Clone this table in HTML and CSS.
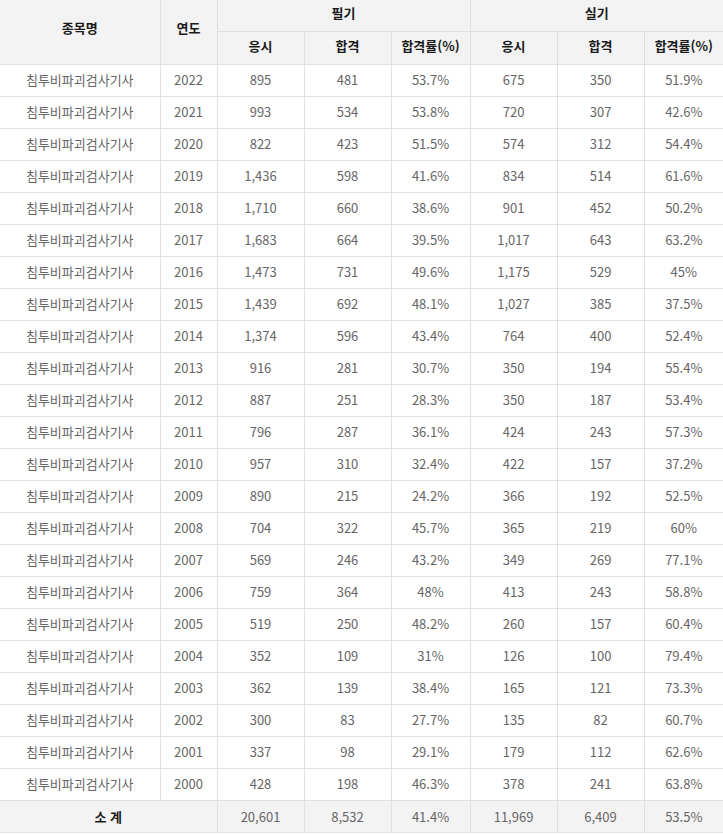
FILE: index.html
```html
<!DOCTYPE html>
<html lang="ko">
<head>
<meta charset="utf-8">
<link rel="stylesheet" href="styles.css">
</head>
<body>
<table class="stats">
<colgroup>
<col class="c-name"><col class="c-year"><col class="c-a"><col class="c-a"><col class="c-r"><col class="c-a"><col class="c-a"><col class="c-r">
</colgroup>
<thead>
<tr class="h1"><th rowspan="2" class="tall">종목명</th><th rowspan="2" class="tall">연도</th><th colspan="3">필기</th><th colspan="3">실기</th></tr>
<tr class="h2"><th>응시</th><th>합격</th><th>합격률(%)</th><th>응시</th><th>합격</th><th>합격률(%)</th></tr>
</thead>
<tbody>
<tr><td>침투비파괴검사기사</td><td>2022</td><td>895</td><td>481</td><td>53.7%</td><td>675</td><td>350</td><td>51.9%</td></tr>
<tr><td>침투비파괴검사기사</td><td>2021</td><td>993</td><td>534</td><td>53.8%</td><td>720</td><td>307</td><td>42.6%</td></tr>
<tr><td>침투비파괴검사기사</td><td>2020</td><td>822</td><td>423</td><td>51.5%</td><td>574</td><td>312</td><td>54.4%</td></tr>
<tr><td>침투비파괴검사기사</td><td>2019</td><td>1,436</td><td>598</td><td>41.6%</td><td>834</td><td>514</td><td>61.6%</td></tr>
<tr><td>침투비파괴검사기사</td><td>2018</td><td>1,710</td><td>660</td><td>38.6%</td><td>901</td><td>452</td><td>50.2%</td></tr>
<tr><td>침투비파괴검사기사</td><td>2017</td><td>1,683</td><td>664</td><td>39.5%</td><td>1,017</td><td>643</td><td>63.2%</td></tr>
<tr><td>침투비파괴검사기사</td><td>2016</td><td>1,473</td><td>731</td><td>49.6%</td><td>1,175</td><td>529</td><td>45%</td></tr>
<tr><td>침투비파괴검사기사</td><td>2015</td><td>1,439</td><td>692</td><td>48.1%</td><td>1,027</td><td>385</td><td>37.5%</td></tr>
<tr><td>침투비파괴검사기사</td><td>2014</td><td>1,374</td><td>596</td><td>43.4%</td><td>764</td><td>400</td><td>52.4%</td></tr>
<tr><td>침투비파괴검사기사</td><td>2013</td><td>916</td><td>281</td><td>30.7%</td><td>350</td><td>194</td><td>55.4%</td></tr>
<tr><td>침투비파괴검사기사</td><td>2012</td><td>887</td><td>251</td><td>28.3%</td><td>350</td><td>187</td><td>53.4%</td></tr>
<tr><td>침투비파괴검사기사</td><td>2011</td><td>796</td><td>287</td><td>36.1%</td><td>424</td><td>243</td><td>57.3%</td></tr>
<tr><td>침투비파괴검사기사</td><td>2010</td><td>957</td><td>310</td><td>32.4%</td><td>422</td><td>157</td><td>37.2%</td></tr>
<tr><td>침투비파괴검사기사</td><td>2009</td><td>890</td><td>215</td><td>24.2%</td><td>366</td><td>192</td><td>52.5%</td></tr>
<tr><td>침투비파괴검사기사</td><td>2008</td><td>704</td><td>322</td><td>45.7%</td><td>365</td><td>219</td><td>60%</td></tr>
<tr><td>침투비파괴검사기사</td><td>2007</td><td>569</td><td>246</td><td>43.2%</td><td>349</td><td>269</td><td>77.1%</td></tr>
<tr><td>침투비파괴검사기사</td><td>2006</td><td>759</td><td>364</td><td>48%</td><td>413</td><td>243</td><td>58.8%</td></tr>
<tr><td>침투비파괴검사기사</td><td>2005</td><td>519</td><td>250</td><td>48.2%</td><td>260</td><td>157</td><td>60.4%</td></tr>
<tr><td>침투비파괴검사기사</td><td>2004</td><td>352</td><td>109</td><td>31%</td><td>126</td><td>100</td><td>79.4%</td></tr>
<tr><td>침투비파괴검사기사</td><td>2003</td><td>362</td><td>139</td><td>38.4%</td><td>165</td><td>121</td><td>73.3%</td></tr>
<tr><td>침투비파괴검사기사</td><td>2002</td><td>300</td><td>83</td><td>27.7%</td><td>135</td><td>82</td><td>60.7%</td></tr>
<tr><td>침투비파괴검사기사</td><td>2001</td><td>337</td><td>98</td><td>29.1%</td><td>179</td><td>112</td><td>62.6%</td></tr>
<tr><td>침투비파괴검사기사</td><td>2000</td><td>428</td><td>198</td><td>46.3%</td><td>378</td><td>241</td><td>63.8%</td></tr>
<tr class="total"><th colspan="2">소 계</th><td>20,601</td><td>8,532</td><td>41.4%</td><td>11,969</td><td>6,409</td><td>53.5%</td></tr>
</tbody>
</table>
</body>
</html>
```
FILE: styles.css
```css
html, body {
  margin: 0;
  padding: 0;
  background: #fff;
}
.stats {
  width: 723px;
  border-collapse: collapse;
  table-layout: fixed;
  font-family: "Noto Sans CJK KR", "Noto Sans", sans-serif;
  font-size: 13px;
  color: #666;
}
.c-name { width: 160px; }
.c-year { width: 57px; }
.c-a { width: 87px; }
.c-r { width: 79px; }
.stats th, .stats td {
  border: 1px solid #e0e0e0;
  padding: 0 0 2px;
  text-align: center;
  vertical-align: middle;
}
.stats tr > :first-child { border-left: none; }
.stats tr > :last-child { border-right: none; }
.stats thead tr.h1 > * { border-top: none; }
.stats th {
  background: #f3f3f3;
  color: #1a1a1a;
  font-weight: bold;
  font-size: 13px;
}
.stats thead th { padding-bottom: 5px; }
.stats thead th.tall { padding-bottom: 9px; }
.stats tr.total > * { padding-bottom: 0; }
.stats thead tr.h1 { height: 31px; }
.stats thead tr.h2 { height: 33px; }
.stats tbody tr { height: 32px; }
.stats tr.total td { background: #f3f3f3; }
```
